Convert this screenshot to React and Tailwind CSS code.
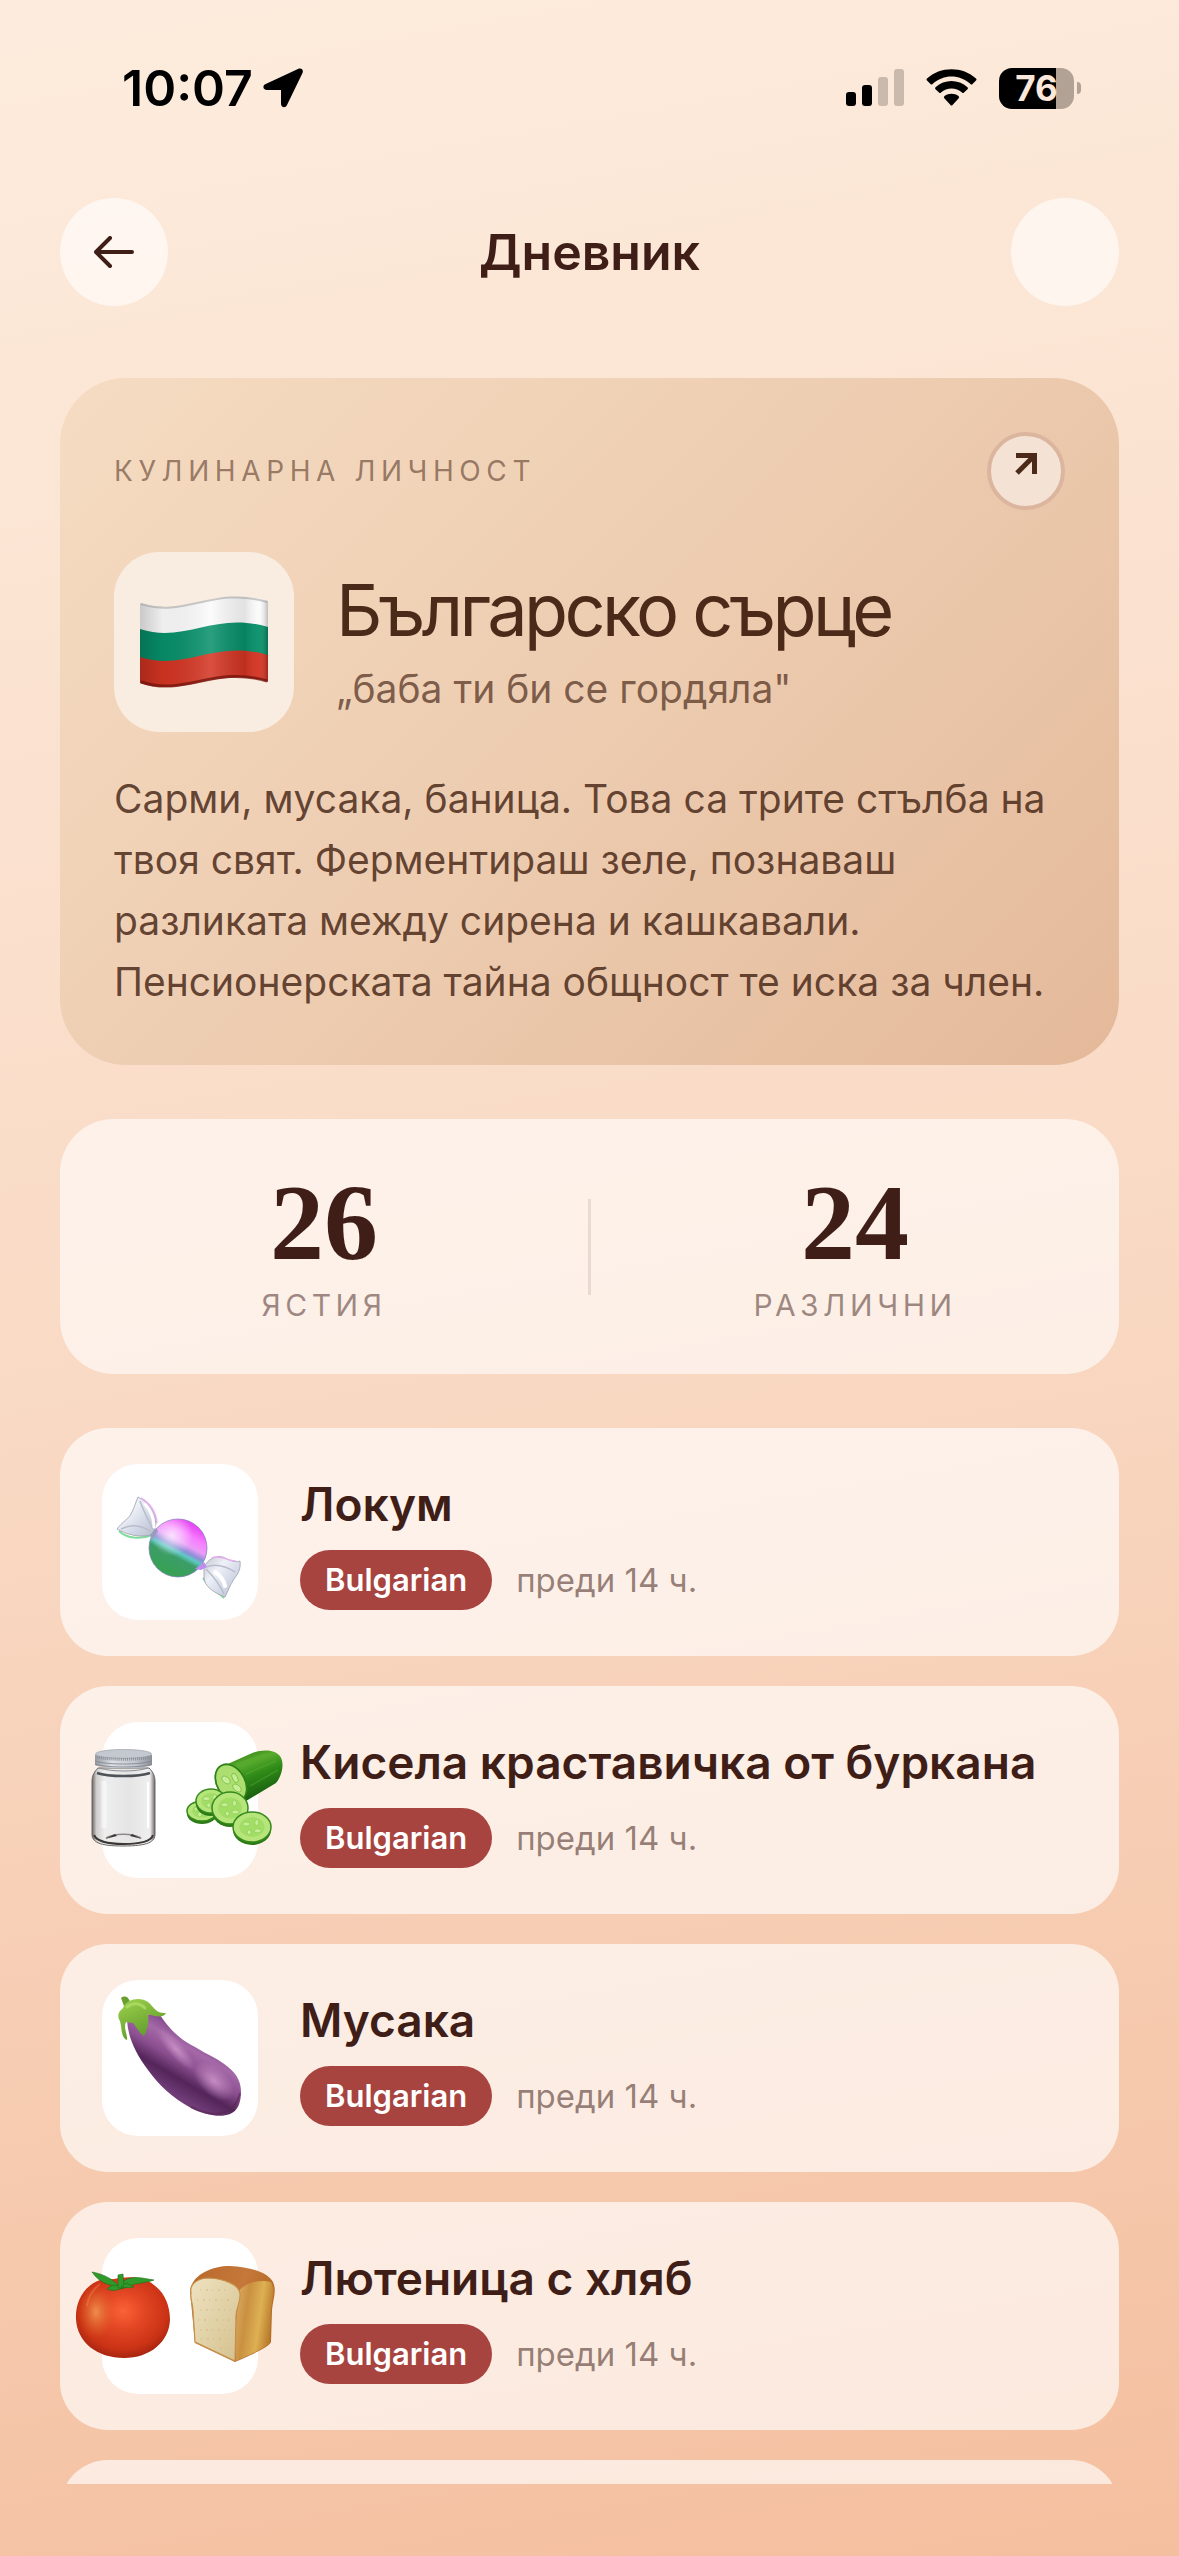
const dishes = [
  { id: 1, name: 'Локум', cuisine: 'Bulgarian', when: 'преди 14 ч.', icons: [Candy] },
  { id: 2, name: 'Кисела краставичка от буркана', cuisine: 'Bulgarian', when: 'преди 14 ч.', icons: [Jar, Cucumber] },
  { id: 3, name: 'Мусака', cuisine: 'Bulgarian', when: 'преди 14 ч.', icons: [Eggplant] },
  { id: 4, name: 'Лютеница с хляб', cuisine: 'Bulgarian', when: 'преди 14 ч.', icons: [Tomato, Bread] },
]

function Candy() {
  return (
    <svg viewBox="0 0 128 128" className="w-32 h-32 shrink-0" aria-hidden="true">
      <defs>
        <linearGradient id="candyBall" x1="0.72" y1="0.1" x2="0.3" y2="0.9">
          <stop offset="0" stopColor="#e84cf5" />
          <stop offset="0.2" stopColor="#f77dff" />
          <stop offset="0.38" stopColor="#eb9cf8" />
          <stop offset="0.5" stopColor="#8b8fd6" />
          <stop offset="0.58" stopColor="#5fc9c4" />
          <stop offset="0.68" stopColor="#3c9d68" />
          <stop offset="1" stopColor="#37a154" />
        </linearGradient>
        <radialGradient id="candyShine" cx="0.4" cy="0.28" r="0.36">
          <stop offset="0" stopColor="#fff" stopOpacity="0.7" />
          <stop offset="1" stopColor="#fff" stopOpacity="0" />
        </radialGradient>
        <linearGradient id="candyWrap" x1="0" y1="0" x2="1" y2="1">
          <stop offset="0" stopColor="#c3c5d1" />
          <stop offset="0.35" stopColor="#eef1f8" />
          <stop offset="0.65" stopColor="#d3d8e6" />
          <stop offset="1" stopColor="#b9bccb" />
        </linearGradient>
      </defs>
      <path d="M3 53 C10 60 24 62 36 57" stroke="#7fdc9d" strokeWidth="2" fill="none" />
      <path d="M22 19 C31 24 40 32 40 46 L37 56 C24 61 10 56 1 51 C6 44 13 41 16 34 C19 28 20 23 22 19Z" fill="url(#candyWrap)" stroke="#9c9ead" strokeWidth="0.8" />
      <path d="M24 23 C27 32 33 43 37 52 M5 51 C15 46 26 47 35 54" stroke="#b9bccb" strokeWidth="1.5" fill="none" />
      <path d="M29 26 C35 33 38 41 38 49" stroke="#fff" strokeWidth="3" fill="none" strokeLinecap="round" />
      <path d="M25 20 C35 26 40 35 41 45" stroke="#e8aef2" strokeWidth="1.5" fill="none" />
      <path d="M87 100 C93 110 101 113 108 120" stroke="#7fdc9d" strokeWidth="2" fill="none" />
      <path d="M88 89 C92 81 100 77 107 79 C113 82 119 85 124 83 C125 91 122 96 118 101 C114 107 112 113 109 119 C99 115 88 109 88 99Z" fill="url(#candyWrap)" stroke="#9c9ead" strokeWidth="0.8" />
      <path d="M90 89 C98 86 108 87 119 94 M90 91 C98 99 104 107 108 116" stroke="#b9bccb" strokeWidth="1.5" fill="none" />
      <path d="M99 94 C105 98 108 103 109 108" stroke="#fff" strokeWidth="4" fill="none" strokeLinecap="round" />
      <path d="M96 80 C103 76 112 83 120 83" stroke="#e8aef2" strokeWidth="1.5" fill="none" />
      <circle cx="62" cy="70" r="29" fill="url(#candyBall)" stroke="#7878b0" strokeWidth="0.7" />
      <circle cx="62" cy="70" r="29" fill="url(#candyShine)" />
      <path d="M79 91 L88 84 L91 89 L85 92Z" fill="#bf8df0" />
      <path d="M34 57 L40 50 L42 53 L36 62Z" fill="#9b9bc0" />
    </svg>
  )
}

function Jar() {
  return (
    <svg viewBox="0 0 104 104" className="w-26 h-26 shrink-0" aria-hidden="true">
      <defs>
        <linearGradient id="jarGlass">
          <stop offset="0" stopColor="#6b6665" />
          <stop offset="0.07" stopColor="#cfcdcc" />
          <stop offset="0.2" stopColor="#efeeee" />
          <stop offset="0.6" stopColor="#e6e5e5" />
          <stop offset="0.92" stopColor="#f0efef" />
          <stop offset="1" stopColor="#6b6665" />
        </linearGradient>
        <linearGradient id="jarLid">
          <stop offset="0" stopColor="#9599a2" />
          <stop offset="0.3" stopColor="#dcdfe4" />
          <stop offset="0.7" stopColor="#c3c7ce" />
          <stop offset="1" stopColor="#8c9099" />
        </linearGradient>
      </defs>
      <path d="M26 20 H77 C82 25 83 29 83 34 V86 C83 94 76 98 51 98 C27 98 20 94 20 86 V34 C20 29 21 25 26 20Z" fill="url(#jarGlass)" stroke="#6a6665" strokeWidth="1" />
      <path d="M25 25 C36 29 67 29 78 25" stroke="#4d5257" strokeWidth="2.5" fill="none" />
      <path d="M27 20 C40 24 64 24 76 20" stroke="#8a8f95" strokeWidth="1" fill="none" />
      <path d="M22 87 C25 94 37 96 52 96 C67 96 79 94 81 87" stroke="#3b3736" strokeWidth="2" fill="none" />
      <path d="M34 90 C42 85 61 85 69 90" stroke="#8c8988" strokeWidth="1.5" fill="none" />
      <path d="M33 91 L43 86 L45 88Z M70 91 L60 86 L58 88Z" fill="#3b3736" />
      <path d="M32 33 V80" stroke="#fff" strokeWidth="5" opacity="0.5" />
      <path d="M76 34 V80" stroke="#fff" strokeWidth="2" />
      <path d="M23 7 V17 C28 21 75 21 80 17 V7Z" fill="url(#jarLid)" />
      <ellipse cx="51.500" cy="6" rx="28" ry="4.500" fill="#c4c8cf" stroke="#a3a7ae" strokeWidth="0.8" />
      <path d="M25 9 C35 12 68 12 78 9" stroke="#8d9199" strokeWidth="3" strokeDasharray="1 1" fill="none" />
      <path d="M23 13 C34 17 69 17 80 13 M23 16 C34 20 69 20 80 16" stroke="#7d818a" strokeWidth="0.8" fill="none" />
    </svg>
  )
}

function CucumberSlice({ cx, cy, rx, ry }) {
  return (
    <g transform={`translate(${cx} ${cy})`}>
      <ellipse cx="0" cy="3" rx={rx} ry={ry} fill="#2c7a16" />
      <ellipse rx={rx} ry={ry} fill="#b5e57b" stroke="#37891c" strokeWidth="1.5" />
      <ellipse rx={rx * 0.66} ry={ry * 0.66} fill="#a2dd65" />
      <g fill="#c6ee97" stroke="#86c84f" strokeWidth="0.6">
        <ellipse cx={rx * -0.3} cy={ry * -0.2} rx="3.500" ry="2" />
        <ellipse cx={rx * 0.25} cy={ry * -0.3} rx="2" ry="3" />
        <ellipse cx={rx * 0.3} cy={ry * 0.25} rx="3.500" ry="2" />
        <ellipse cx={rx * -0.15} cy={ry * 0.35} rx="2" ry="2.500" />
      </g>
    </g>
  )
}

function Cucumber() {
  return (
    <svg viewBox="0 0 104 104" className="w-26 h-26 shrink-0" aria-hidden="true">
      <defs>
        <linearGradient id="cukeSkin" x1="0.3" y1="0" x2="0.75" y2="1">
          <stop offset="0" stopColor="#2d7d14" />
          <stop offset="0.25" stopColor="#58ab2d" />
          <stop offset="0.5" stopColor="#2f8a18" />
          <stop offset="1" stopColor="#10500c" />
        </linearGradient>
      </defs>
      <path d="M37 19 L66 6 C77 1 90 1 96 8 C101 15 98 28 92 35 L62 53Z" fill="url(#cukeSkin)" />
      <path d="M52 16 L82 6 M62 26 L92 13 M66 38 L94 22" stroke="#69bd3c" strokeWidth="1.5" opacity="0.3" />
      <ellipse cx="47" cy="35" rx="14" ry="20" transform="rotate(-30 47 35)" fill="#addf70" stroke="#2e8119" strokeWidth="1.8" />
      <g fill="#c6ee97" stroke="#79bd43" strokeWidth="0.8">
        <ellipse cx="42" cy="32" rx="3" ry="5" transform="rotate(-50 42 32)" />
        <ellipse cx="51" cy="30" rx="2.500" ry="5" transform="rotate(-25 51 30)" />
        <ellipse cx="53" cy="40" rx="3" ry="5" transform="rotate(-50 53 40)" />
      </g>
      <CucumberSlice cx={18} cy={63} rx={15} ry={10} />
      <CucumberSlice cx={27} cy={53} rx={15} ry={12} />
      <CucumberSlice cx={46} cy={60} rx={18} ry={16} />
      <CucumberSlice cx={68} cy={79} rx={19} ry={15} />
    </svg>
  )
}

function Eggplant() {
  return (
    <svg viewBox="0 0 128 128" className="w-32 h-32 shrink-0" aria-hidden="true">
      <defs>
        <linearGradient id="eggBody" x1="0.62" y1="0.22" x2="0.3" y2="0.72">
          <stop offset="0" stopColor="#7c4486" />
          <stop offset="0.25" stopColor="#a569a8" />
          <stop offset="0.5" stopColor="#8b4f90" />
          <stop offset="0.75" stopColor="#532559" />
          <stop offset="1" stopColor="#6f3c78" />
        </linearGradient>
        <radialGradient id="eggShine" cx="0.5" cy="0.5" r="0.5">
          <stop offset="0" stopColor="#cb93c8" stopOpacity="0.9" />
          <stop offset="1" stopColor="#cb93c8" stopOpacity="0" />
        </radialGradient>
        <linearGradient id="eggCap" x1="0" y1="0" x2="0.5" y2="1">
          <stop offset="0" stopColor="#9fd34e" />
          <stop offset="1" stopColor="#5f9a2a" />
        </linearGradient>
      </defs>
      <path d="M11 26 L42 18 C54 36 62 44 79 53 C92 61 103 65 112 73 C121 80 125 88 125 98 C125 108 122 117 114 120 C104 124 90 121 75 114 C55 103 43 91 32 76 C20 60 12 44 11 26Z" fill="url(#eggBody)" />
      <ellipse cx="98" cy="87" rx="25" ry="14" transform="rotate(42 98 87)" fill="url(#eggShine)" />
      <ellipse cx="60" cy="55" rx="27" ry="8" transform="rotate(48 60 55)" fill="url(#eggShine)" />
      <path d="M75 113 C100 126 119 120 124 99" stroke="#562650" strokeWidth="2" fill="none" opacity="0.6" />
      <path d="M8 12 L5 4 C7 2 10 2 12 4 L15 9Z" fill="#6a9f30" />
      <path d="M7 14 C11 4 25 3 32 8 C38 13 40 20 50 19 C48 24 39 23 32 20 C33 28 32 35 28 42 C22 38 21 33 17 29 L10 28 C7 34 12 41 11 46 C5 44 6 34 4 27 C1 22 2 18 7 14Z" fill="url(#eggCap)" />
      <path d="M11 13 C17 8 24 9 29 14" stroke="#b4e06b" strokeWidth="3" fill="none" strokeLinecap="round" opacity="0.7" />
    </svg>
  )
}

function Tomato() {
  return (
    <svg viewBox="0 0 104 104" className="w-26 h-26 shrink-0" aria-hidden="true">
      <defs>
        <radialGradient id="tomatoBody" cx="0.5" cy="0.42" r="0.62">
          <stop offset="0" stopColor="#fb6238" />
          <stop offset="0.35" stopColor="#e34724" />
          <stop offset="0.75" stopColor="#cb3315" />
          <stop offset="1" stopColor="#9c2010" />
        </radialGradient>
        <radialGradient id="tomatoShine" cx="0.5" cy="0.5" r="0.5">
          <stop offset="0" stopColor="#f39a55" stopOpacity="0.85" />
          <stop offset="1" stopColor="#e0702e" stopOpacity="0" />
        </radialGradient>
      </defs>
      <path d="M42 15 C55 12 72 12 82 21 C93 29 98 42 98 56 C97 78 78 94 52 94 C25 94 5 78 4 55 C3 37 13 21 28 16Z" fill="url(#tomatoBody)" />
      <ellipse cx="24" cy="48" rx="18" ry="27" fill="url(#tomatoShine)" />
      <path d="M28 20 C19 27 16 34 15 42" stroke="#f7874e" strokeWidth="2" fill="none" opacity="0.4" />
      <g fill="#2f9a2a" stroke="#1f6b1c" strokeWidth="0.6">
        <path d="M20 8 C31 10 41 15 47 22 C36 22 27 18 20 8Z" />
        <path d="M47 24 C48 16 59 12 70 14 L82 16 C75 19 60 19 50 25Z" />
        <path d="M35 25 C40 20 45 20 50 24 C45 27 39 27 35 25Z" />
        <path d="M46 11 L51 10 L52 24 L46 24Z" />
        <path d="M49 23 C55 24 58 24 62 23 L54 19Z" />
      </g>
    </svg>
  )
}

function Bread() {
  return (
    <svg viewBox="0 0 104 104" className="w-26 h-26 shrink-0" aria-hidden="true">
      <defs>
        <linearGradient id="breadTop" x1="0" y1="0" x2="1" y2="0.4">
          <stop offset="0" stopColor="#b9672a" />
          <stop offset="0.6" stopColor="#c5783a" />
          <stop offset="1" stopColor="#b56a25" />
        </linearGradient>
        <linearGradient id="breadSide" x1="0" y1="0.2" x2="1" y2="0.5">
          <stop offset="0" stopColor="#dcab63" />
          <stop offset="0.3" stopColor="#c99041" />
          <stop offset="0.65" stopColor="#deb053" />
          <stop offset="1" stopColor="#b47427" />
        </linearGradient>
        <linearGradient id="breadFace" x1="0" y1="0" x2="1" y2="1">
          <stop offset="0" stopColor="#eee2c0" />
          <stop offset="1" stopColor="#d5c18e" />
        </linearGradient>
      </defs>
      <path d="M6 27 C8 11 27 2 46 2 C66 3 84 8 89 18 C93 27 89 35 88 46 L87 78 C86 83 60 94 51 98 L11 79Z" fill="url(#breadTop)" />
      <path d="M55 27 C61 19 75 15 87 18 C92 27 88 35 87 46 L86 79 C82 84 60 93 52 97 L52 60Z" fill="url(#breadSide)" />
      <path d="M7 29 C5 20 14 14 25 14 C40 15 55 20 56 30 C57 39 51 45 52 55 L51 97 L11 78 L9 47 C9 39 6 36 7 29Z" fill="url(#breadFace)" stroke="#c78f48" strokeWidth="1.2" />
      <path d="M16 26 H46 M13 36 H49 M16 46 H47 M14 56 H48 M16 66 H47 M17 75 H46 M30 84 H48" stroke="#cdb985" strokeWidth="1" strokeDasharray="1 5 2 4" />
    </svg>
  )
}

function BulgarianFlag() {
  return (
    <svg viewBox="0 0 128 92" className="w-32 h-23" role="img" aria-label="България">
      <defs>
        <linearGradient id="flagShade">
          <stop offset="0" stopColor="#000" stopOpacity="0.2" />
          <stop offset="0.18" stopColor="#000" stopOpacity="0.05" />
          <stop offset="0.55" stopColor="#fff" stopOpacity="0.14" />
          <stop offset="0.82" stopColor="#000" stopOpacity="0.1" />
          <stop offset="0.93" stopColor="#fff" stopOpacity="0.04" />
          <stop offset="1" stopColor="#000" stopOpacity="0.25" />
        </linearGradient>
      </defs>
      <path d="M0 7 C45 22 74 -11 128 5 V44 H0Z" fill="#fbfbfb" />
      <path d="M0 33 C45 48 74 15 128 31 V74 H0Z" fill="#07906a" />
      <path d="M0 61 C45 76 74 43 128 59 V86 C74 70 45 102 0 87Z" fill="#d33422" />
      <path d="M0 7 C45 22 74 -11 128 5 V86 C74 70 45 102 0 87Z" fill="url(#flagShade)" />
      <path d="M1 8 C45 22 74 -10 127 6" fill="none" stroke="#9a9a9a" strokeWidth="2" opacity="0.5" />
      <path d="M1 86 C45 101 74 69 127 85" fill="none" stroke="#6b0f08" strokeWidth="3" opacity="0.7" />
    </svg>
  )
}

function StatusBar() {
  return (
    <div className="flex items-start justify-between pt-16 pl-[122px] pr-[98px] h-[198px] shrink-0 text-black">
      <div className="flex items-center gap-2.5 h-12">
        <span className="text-[50px] leading-12 font-semibold">10:07</span>
        <svg viewBox="0 0 40 40" className="w-10 h-10" fill="currentColor" aria-hidden="true">
          <path d="M35.500 0.800 C38.500 -0.400 40.800 2 39.500 5 L24 37 C22.500 40.500 18 39.500 18 36 V22 H4 C0 22 -1 17.500 2.700 16Z" />
        </svg>
      </div>
      <div className="flex items-center h-12">
        <svg viewBox="0 0 58 38" className="w-[58px] h-[38px]" aria-hidden="true">
          <rect x="0" y="23" width="10" height="14" rx="3" />
          <rect x="16" y="16" width="10" height="21" rx="3" />
          <rect x="32" y="8" width="10" height="29" rx="3" opacity="0.2" />
          <rect x="48" y="0" width="10" height="37" rx="3" opacity="0.2" />
        </svg>
        <svg viewBox="0 0 51 38" className="w-[51px] h-[38px] ml-[22px]" aria-hidden="true">
          <path d="M1 9.500 C14 -3 37 -3 50 9.500 Q51 10.500 50 11.500 L46.500 15 Q45.500 16 44.500 15 C33.500 5 17.500 5 6.500 15 Q5.500 16 4.500 15 L1 11.500 Q0 10.500 1 9.500Z" />
          <path d="M9.500 18.200 C18.500 10 32.500 10 41.500 18.200 Q42.500 19.200 41.500 20.200 L38 23.500 Q37 24.500 36 23.500 C30 18.300 21 18.300 15 23.500 Q14 24.500 13 23.500 L9.500 20.200 Q8.500 19.200 9.500 18.200Z" />
          <path d="M18.500 27 C22.500 24 28.500 24 32.500 27 Q33.800 28.200 32.700 29.300 L26.500 36 Q25.500 37 24.500 36 L18.300 29.300 Q17.200 28.200 18.500 27Z" />
        </svg>
        <div className="ml-[22px] flex items-center gap-[3px]">
          <div className="flex items-center justify-center h-[41px] w-[75px] rounded-[13px] bg-linear-to-r from-black from-76% to-[#b1a295] to-76% text-[#fbe8da] text-[35px] leading-none font-bold">
            76
          </div>
          <div className="w-1 h-3 rounded-r-full bg-[#b1a295]" />
        </div>
      </div>
    </div>
  )
}

function Header() {
  return (
    <header className="flex items-center justify-between shrink-0">
      <button type="button" aria-label="Назад" className="flex items-center justify-center w-27 h-27 rounded-full bg-white/60">
        <svg viewBox="0 0 40 32" className="w-10 h-8" fill="none" stroke="currentColor" strokeWidth="4" strokeLinecap="round" strokeLinejoin="round" aria-hidden="true">
          <path d="M16 2 L2 16 L16 30 M2 16 H38" />
        </svg>
      </button>
      <h1 className="text-[50px] leading-15 font-semibold">Дневник</h1>
      <button type="button" aria-label="Още" className="w-27 h-27 rounded-full bg-white/60" />
    </header>
  )
}

function IdentityCard() {
  return (
    <section className="shrink-0 mt-18 p-[54px] pb-[53px] rounded-[66px] bg-linear-135 from-[#f5dcc2] via-[#edccb0] to-[#e4b99a] text-[#4b2a1a]">
      <div className="flex items-center justify-between">
        <p className="text-[28px] leading-10 tracking-[0.2em] text-[#4b2a1a]/55">КУЛИНАРНА ЛИЧНОСТ</p>
        <button type="button" aria-label="Сподели" className="flex items-start justify-center w-[78px] h-[78px] pt-[17px] rounded-full border-4 border-[#dbb59e] bg-[#f4e2d4]">
          <svg viewBox="0 0 22 22" className="w-[22px] h-[22px]" fill="none" stroke="currentColor" strokeWidth="5" aria-hidden="true">
            <path d="M2 20 L19 3" />
            <path d="M1 2.500 H19.500 V21" />
          </svg>
        </button>
      </div>
      <div className="flex items-center gap-[42px] mt-[42px]">
        <div className="flex items-center justify-center w-45 h-45 shrink-0 rounded-[45px] bg-[#f9ece0]">
          <BulgarianFlag />
        </div>
        <div>
          <h2 className="text-[72px] leading-21 tracking-tighter">Българско сърце</h2>
          <p className="mt-2.5 text-[39px] leading-[54px] text-[#4b2a1a]/70">„баба ти би се гордяла"</p>
        </div>
      </div>
      <p className="mt-9 text-[39px] leading-[61px] text-[#4b2a1a]/85">
        Сарми, мусака, баница. Това са трите стълба на твоя свят. Ферментираш зеле, познаваш разликата между сирена и кашкавали. Пенсионерската тайна общност те иска за член.
      </p>
    </section>
  )
}

function Stat({ value, label }) {
  return (
    <div className="flex flex-col items-center flex-1">
      <dd className="order-1 text-[108px] leading-[108px] font-bold font-['Liberation_Serif',serif]">{value}</dd>
      <dt className="order-2 mt-2 text-[30px] leading-10 tracking-[0.15em] text-[#3f1e18]/50">{label}</dt>
    </div>
  )
}

function DishRow({ dish }) {
  return (
    <li className="flex items-center gap-[42px] shrink-0 py-9 px-[42px] rounded-[48px] bg-white/65">
      <div className="flex items-center justify-center gap-2 w-39 h-39 shrink-0 rounded-[36px] bg-white">
        {dish.icons.map((Icon, i) => <Icon key={i} />)}
      </div>
      <div className="min-w-0">
        <h3 className="text-[46px] leading-[60px] font-semibold">{dish.name}</h3>
        <div className="flex items-center gap-6 mt-4">
          <span className="px-[25px] rounded-full bg-[#a74440] text-white text-[31px] leading-15 font-semibold">{dish.cuisine}</span>
          <span className="text-[33px] leading-15 text-[#3f1e18]/55">{dish.when}</span>
        </div>
      </div>
    </li>
  )
}

export default function App() {
  return (
    <div className="flex flex-col h-screen pb-18 bg-linear-170 from-[#fdecdd] via-[#f9dac5] to-[#f4bf9f] text-[#3f1e18] font-['Inter',sans-serif]">
      <StatusBar />
      <main className="flex flex-col flex-1 min-h-0 px-15 overflow-hidden">
        <Header />
        <IdentityCard />
        <dl className="flex items-center shrink-0 h-[255px] mt-[54px] rounded-[54px] bg-white/60">
          <Stat value="26" label="ЯСТИЯ" />
          <div className="w-[3px] h-24 bg-[#3f1e18]/10" />
          <Stat value="24" label="РАЗЛИЧНИ" />
        </dl>
        <ul className="flex flex-col gap-[30px] mt-[54px]">
          {dishes.map(dish => <DishRow key={dish.id} dish={dish} />)}
          <li className="h-57 shrink-0 rounded-[48px] bg-white/65" />
        </ul>
      </main>
    </div>
  )
}
